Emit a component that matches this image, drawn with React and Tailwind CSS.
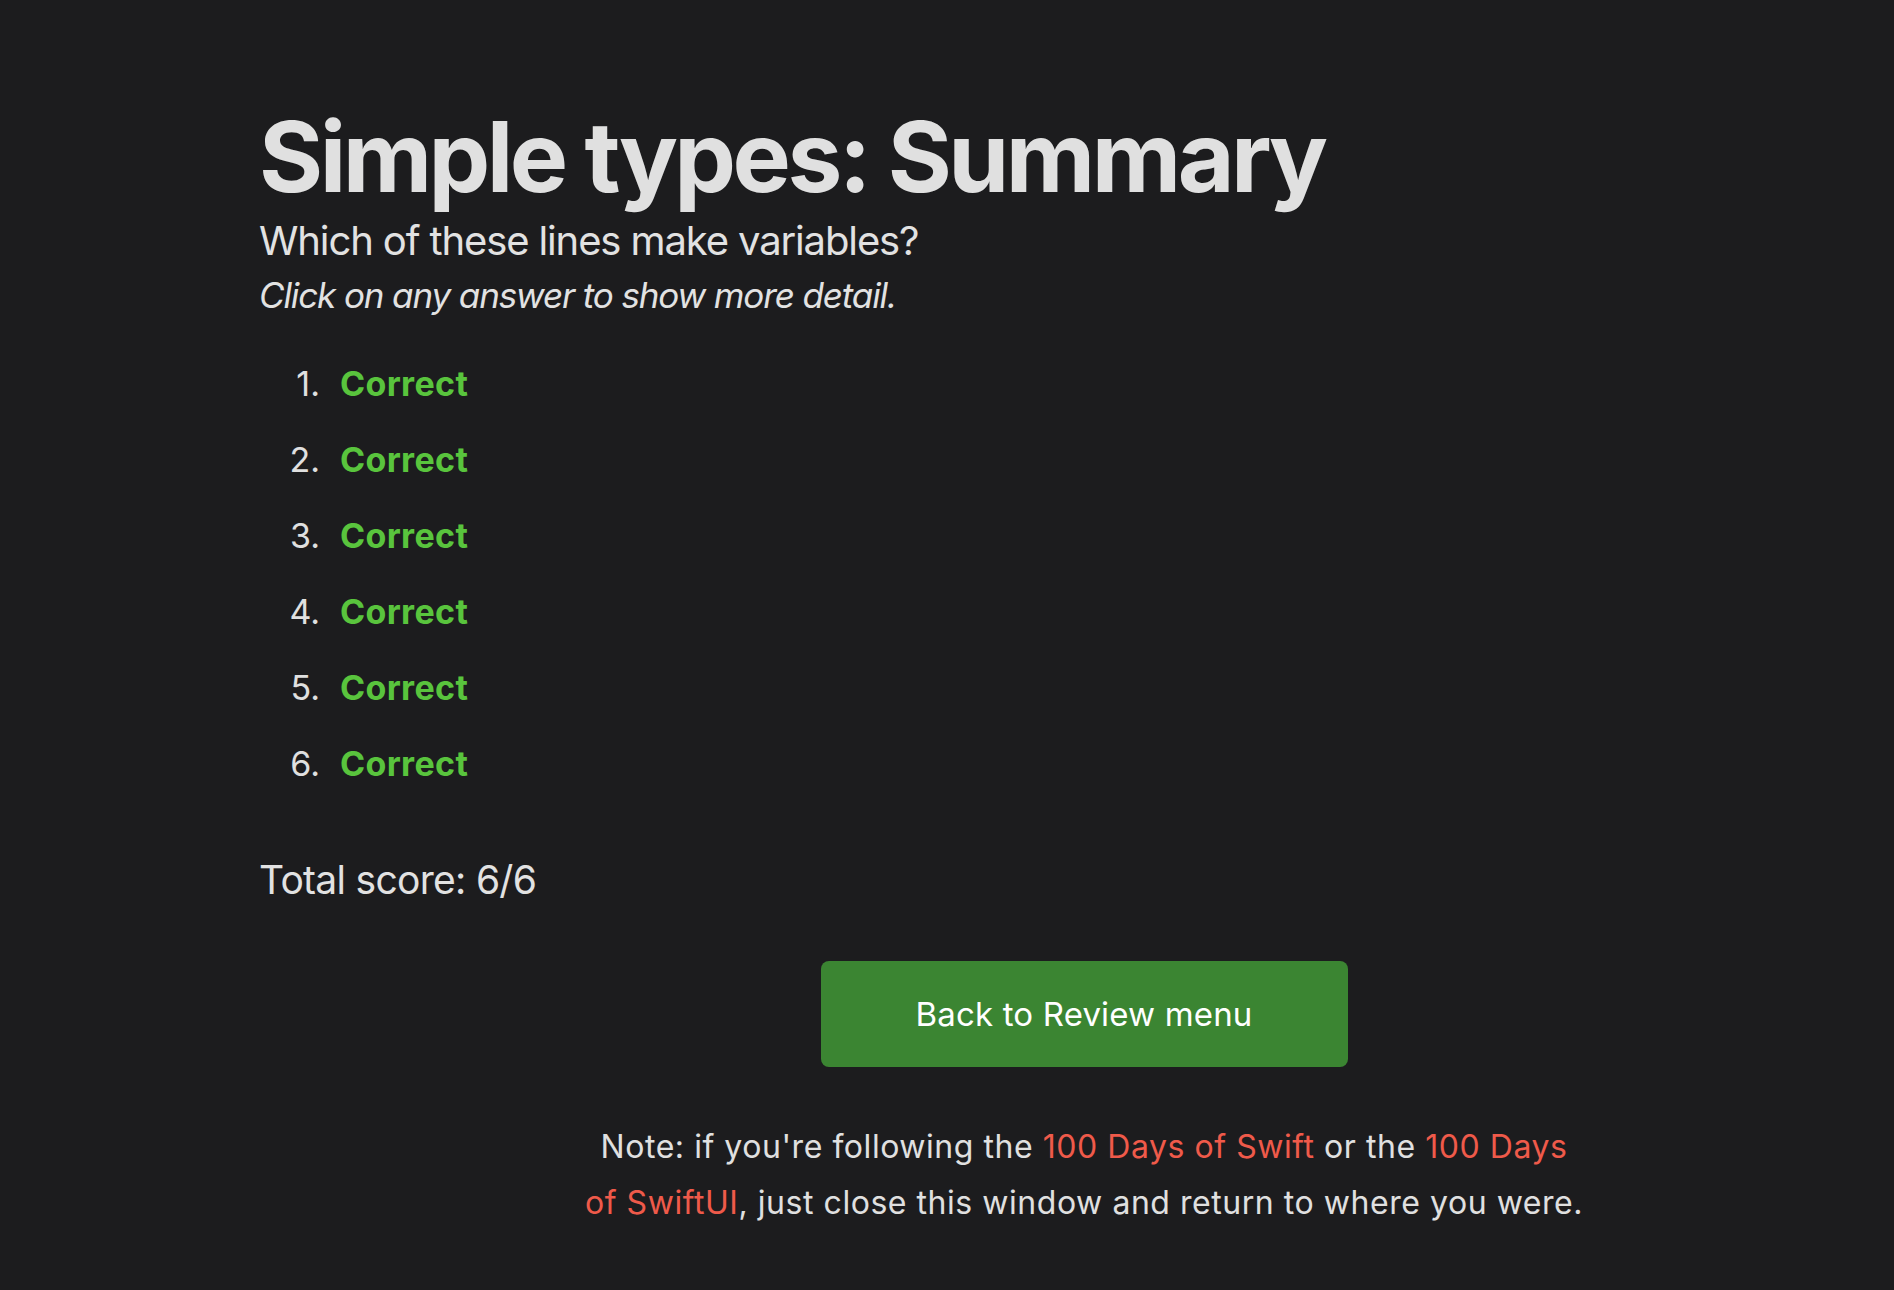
export default function App() {
  const items = [1, 2, 3, 4, 5, 6];
  return (
    <div className="min-h-[1290px] w-full bg-[#1c1c1e] text-[#e2e2e2]" style={{ fontFamily: "Inter, 'Noto Sans', sans-serif" }}>
      <div className="pl-[259px] pt-[108px]">
        <h1 className="text-[98px] leading-[98px] font-bold tracking-[-0.036em] text-[#e0e0e0]">Simple types: Summary</h1>
        <p className="mt-[15px] text-[40px] leading-[40px] tracking-[-0.028em]">Which of these lines make variables?</p>
        <p className="mt-[17px] text-[35px] leading-[35px] italic tracking-[-0.032em]">Click on any answer to show more detail.</p>
        <ol className="mt-[33px]">
          {items.map((n) => (
            <li key={n} className="flex items-baseline h-[76px] text-[34px] leading-[76px]">
              <span className="w-[61px] text-right font-normal text-[#e0e0e0]">{n}.</span>
              <span className="ml-[20px] font-bold text-[#59c43d] tracking-[0.01em]">Correct</span>
            </li>
          ))}
        </ol>
        <p className="mt-[58px] text-[39px] leading-[39px] tracking-[-0.018em]">Total score: 6/6</p>
      </div>
      <div className="mt-[62px] flex flex-col items-center w-[1000px] ml-[584px]">
        <button className="w-[527px] h-[106px] rounded-[8px] bg-[#3b8532] text-white text-[33px] leading-[33px] tracking-[0.005em]">
          Back to Review menu
        </button>
        <p className="mt-[52px] text-center text-[32px] leading-[56px] tracking-[0.017em] text-[#e0e0e0]">
          Note: if you're following the <span className="text-[#ef5a4a]">100 Days of Swift</span> or the{" "}
          <span className="text-[#ef5a4a]">100 Days of SwiftUI</span>, just close this window and return to where you were.
        </p>
      </div>
    </div>
  );
}
